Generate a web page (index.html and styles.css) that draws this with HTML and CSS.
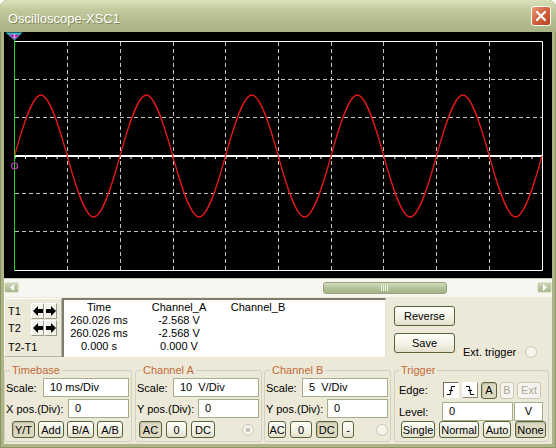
FILE: index.html
```html
<!DOCTYPE html>
<html lang="en">
<head>
  <meta charset="UTF-8">
  <meta name="viewport" content="width=device-width, initial-scale=1.0">
  <title>Oscilloscope-XSC1</title>
  <link rel="stylesheet" href="styles.css">
</head>
<body>
  <div class="window">
    <div class="titlebar">
      <span class="title">Oscilloscope-XSC1</span>
      <span class="close"><svg width="12" height="12" viewBox="0 0 12 12"><path d="M2 2L10 10M10 2L2 10"/></svg></span>
    </div>

    <div class="main">
      <div class="screen">
        <svg width="548" height="246" viewBox="0 0 548 246">
          <path class="grid" d="M63.5 10V238M116.5 10V238M169.5 10V238M221.5 10V238M274.5 10V238M327.5 10V238M379.5 10V238M432.5 10V238M485.5 10V238M11 47.5H538M11 85.5H538M11 161.5H538M11 199.5H538"/>
          <path class="frame" d="M10.5 9.5H538.5V238.5H10.5"/>
          <path class="axis" d="M10.5 124H538"/>
          <path class="ticks" d="M10.5 126H538"/>
          <path class="trace-a" d="M10.5,124 C19.1,92.75 28.48,63 36.875,63 S54.65,92.75 63.25,124 S81.23,185 89.625,185 S107.4,155.25 116,124 S133.98,63 142.375,63 S160.15,92.75 168.75,124 S186.73,185 195.125,185 S212.9,155.25 221.5,124 S239.48,63 247.875,63 S265.65,92.75 274.25,124 S292.23,185 300.625,185 S318.4,155.25 327,124 S344.98,63 353.375,63 S371.15,92.75 379.75,124 S397.73,185 406.125,185 S423.9,155.25 432.5,124 S450.48,63 458.875,63 S476.65,92.75 485.25,124 S503.23,185 511.625,185 S529.4,155.25 538,124"/>
          <path class="cursor" d="M10.5 4V238.5"/>
          <circle class="ground" cx="10.5" cy="134" r="3"/>
          <path class="marker-edge" d="M1.5 0.5H18.5L10.5 8.5Z"/>
          <path class="marker" d="M4.5 2.5H15.5L10.5 7.5Z"/>
          <text class="marker-num" x="10.5" y="6">1</text>
        </svg>
      </div>

      <div class="scrollbar">
        <span class="sb-btn"><svg width="6" height="7" viewBox="0 0 6 7"><path d="M5 0V7L1 3.5Z"/></svg></span>
        <div class="sb-track"><span class="sb-thumb"><i></i></span></div>
        <span class="sb-btn"><svg width="6" height="7" viewBox="0 0 6 7"><path d="M1 0V7L5 3.5Z"/></svg></span>
      </div>

      <div class="readout">
        <div class="cursors">
          <div class="cur-row">
            <span class="cur-name">T1</span>
            <span class="arrow-btn"><svg width="10" height="10" viewBox="0 0 10 10"><path d="M0 5L5 0V3H10V7H5V10Z"/></svg></span>
            <span class="arrow-btn"><svg width="10" height="10" viewBox="0 0 10 10"><path d="M10 5L5 0V3H0V7H5V10Z"/></svg></span>
          </div>
          <div class="cur-row">
            <span class="cur-name">T2</span>
            <span class="arrow-btn"><svg width="10" height="10" viewBox="0 0 10 10"><path d="M0 5L5 0V3H10V7H5V10Z"/></svg></span>
            <span class="arrow-btn"><svg width="10" height="10" viewBox="0 0 10 10"><path d="M10 5L5 0V3H0V7H5V10Z"/></svg></span>
          </div>
          <div class="cur-diff">T2-T1</div>
        </div>

        <div class="values">
          <span>Time</span><span>Channel_A</span><span>Channel_B</span>
          <span>260.026 ms</span><span>-2.568 V</span><span></span>
          <span>260.026 ms</span><span>-2.568 V</span><span></span>
          <span>0.000 s</span><span>0.000 V</span><span></span>
        </div>

        <div class="actions">
          <button class="btn big">Reverse</button>
          <div class="act-row">
            <button class="btn big">Save</button>
            <span class="ext">Ext. trigger</span>
            <span class="radio ext-radio"></span>
          </div>
        </div>
      </div>

      <div class="controls">
        <fieldset class="group timebase">
          <legend>Timebase</legend>
          <div class="row"><span>Scale:</span><span class="field">10 ms/Div</span></div>
          <div class="row"><span>X pos.(Div):</span><span class="field pos">0</span></div>
          <div class="btn-row tb-btns">
            <button class="btn on w23">Y/T</button>
            <button class="btn w26">Add</button>
            <button class="btn w27">B/A</button>
            <button class="btn w26">A/B</button>
          </div>
        </fieldset>

        <fieldset class="group chan-a">
          <legend>Channel A</legend>
          <div class="row"><span>Scale:</span><span class="field">10&nbsp; V/Div</span></div>
          <div class="row"><span>Y pos.(Div):</span><span class="field pos">0</span></div>
          <div class="btn-row ch-btns">
            <button class="btn on w23">AC</button>
            <button class="btn w21">0</button>
            <button class="btn w24">DC</button>
            <span class="radio dot a-radio"></span>
          </div>
        </fieldset>

        <fieldset class="group chan-b">
          <legend>Channel B</legend>
          <div class="row"><span>Scale:</span><span class="field">5&nbsp; V/Div</span></div>
          <div class="row"><span>Y pos.(Div):</span><span class="field pos">0</span></div>
          <div class="btn-row ch-btns">
            <button class="btn w19">AC</button>
            <button class="btn w22">0</button>
            <button class="btn on w23">DC</button>
            <button class="btn w13">-</button>
            <span class="radio b-radio"></span>
          </div>
        </fieldset>

        <fieldset class="group trigger">
          <legend>Trigger</legend>
          <div class="edge-row">
            <span class="trig-label">Edge:</span>
            <span class="edge on"><svg width="10" height="11" viewBox="0 0 10 11"><path d="M1 9.5H4.5L5.5 1.5H9M3 5.5H7"/></svg></span>
            <span class="edge"><svg width="10" height="11" viewBox="0 0 10 11"><path d="M1 1.5H4.5L5.5 9.5H9M3 5.5H7"/></svg></span>
            <button class="btn on w16">A</button>
            <button class="btn off w14">B</button>
            <button class="btn off w24">Ext</button>
          </div>
          <div class="level-row">
            <span class="trig-label">Level:</span>
            <span class="field level">0</span>
            <span class="field unit">V</span>
          </div>
          <div class="btn-row trig-btns">
            <button class="btn w34">Single</button>
            <button class="btn w40">Normal</button>
            <button class="btn w28">Auto</button>
            <button class="btn on w31">None</button>
          </div>
        </fieldset>
      </div>
    </div>
  </div>
</body>
</html>
```

FILE: styles.css
```css
* {
  margin: 0;
  padding: 0;
  box-sizing: border-box;
}

body {
  width: 556px;
  height: 448px;
  overflow: hidden;
  background: #fff;
  color: #000;
  font: 11px "Liberation Sans", Arial, sans-serif;
}

.window {
  display: flex;
  flex-direction: column;
  width: 556px;
  height: 448px;
  background: #adb587;
  border-radius: 8px 8px 0 0;
  box-shadow: inset 1px 0 #8b9366, inset -1px 0 #8b9366, inset 0 -1px #8b9366;
}

/* title bar */
.titlebar {
  display: flex;
  align-items: center;
  justify-content: space-between;
  height: 32px;
  padding: 0 5px 0 8px;
  border-radius: 8px 8px 0 0;
  background: linear-gradient(#dce2bd, #c3cb9e 30%, #b3bc8d 70%, #aab384);
}

.title {
  padding-top: 4px;
  color: #fff;
  font-size: 13px;
  text-shadow: 1px 1px 1px #767e52;
}

.close {
  display: flex;
  align-items: center;
  justify-content: center;
  width: 20px;
  height: 20px;
  border: 1px solid #fff;
  border-radius: 3px;
  background: linear-gradient(135deg, #eb9a78, #d2603b 50%, #b9441f);
}

.close svg {
  fill: none;
  stroke: #fff;
  stroke-width: 2.2;
  stroke-linecap: round;
}

.main {
  display: flex;
  flex-direction: column;
  flex: 1;
  margin: 0 4px 4px;
  background: #ece9d8;
}

/* screen */
.screen {
  height: 246px;
  background: #000;
}

.screen svg {
  display: block;
}

.grid {
  fill: none;
  stroke: #c4c4c4;
  stroke-width: 1;
  stroke-dasharray: 4 3;
}

.frame {
  fill: none;
  stroke: #fff;
  stroke-width: 1;
}

.axis {
  stroke: #fff;
  stroke-width: 2;
}

.ticks {
  stroke: #fff;
  stroke-width: 2;
  stroke-dasharray: 1 9.55;
}

.trace-a {
  fill: none;
  stroke: #e3191c;
  stroke-width: 1.3;
}

.cursor {
  stroke: #22d222;
  stroke-width: 1;
}

.ground {
  fill: none;
  stroke: #c03cc0;
  stroke-width: 1.2;
}

.marker-edge {
  fill: #2cbcc4;
}

.marker {
  fill: #b42cb4;
}

.marker-num {
  fill: #fff;
  font-size: 5px;
  text-anchor: middle;
}

/* scrollbar */
.scrollbar {
  display: flex;
  align-items: flex-start;
  height: 19px;
  padding-top: 3px;
  background: #f7f6f0;
  border-top: 1px solid #c9c8bb;
}

.sb-btn {
  display: flex;
  align-items: center;
  justify-content: center;
  width: 15px;
  height: 11px;
  border: 1px solid #e0e6d2;
  border-radius: 2px;
  background: linear-gradient(#cbd5b4, #a9b78e);
}

.sb-btn svg {
  fill: #fff;
}

.sb-track {
  flex: 1;
  padding-left: 304px;
}

.sb-thumb {
  display: flex;
  align-items: center;
  justify-content: center;
  width: 124px;
  height: 12px;
  border: 1px solid #98a67a;
  border-radius: 3px;
  background: linear-gradient(#d4ddbf, #b4c299 50%, #a4b48a);
}

.sb-thumb i {
  width: 8px;
  height: 6px;
  background: repeating-linear-gradient(90deg, #eef2e2 0 1px, transparent 1px 2px);
}

/* readout */
.readout {
  display: flex;
  height: 63px;
  padding-top: 1px;
}

.cursors {
  width: 58px;
  height: 59px;
  padding: 4px 0 0 3px;
  border: 1px solid;
  border-color: #fff #b9b6a5 #b9b6a5 #fff;
}

.cur-row {
  display: flex;
  align-items: center;
  height: 16px;
}

.cur-row + .cur-row {
  margin-top: 1px;
}

.cur-name {
  width: 23px;
}

.arrow-btn {
  display: flex;
  align-items: center;
  justify-content: center;
  width: 13px;
  height: 16px;
  border: 1px solid;
  border-color: #fff #9d9a8a #9d9a8a #fff;
  background: #f3f2ea;
}

.cur-diff {
  margin-top: 5px;
  line-height: 13px;
}

.values {
  display: grid;
  grid-template-columns: 70px 90px 68px;
  grid-auto-rows: 13px;
  align-content: start;
  width: 324px;
  height: 59px;
  padding-top: 1px;
  background: #fff;
  border-top: 2px solid #7f7c6d;
  border-left: 2px solid #7f7c6d;
  border-right: 1px solid #e4e2d6;
}

.values span {
  line-height: 13px;
  text-align: center;
}

.actions {
  display: flex;
  flex-direction: column;
  margin-left: 8px;
  padding-top: 8px;
}

.act-row {
  display: flex;
  align-items: flex-end;
  margin-top: 7px;
}

.ext {
  margin: 0 0 -6px 8px;
  line-height: 13px;
}

/* buttons */
.btn {
  height: 17px;
  padding: 0;
  border: 1px solid #57643a;
  border-radius: 3px;
  background: linear-gradient(#fefefa, #f3f1e5 60%, #e3e0cc);
  color: #000;
  font: inherit;
}

.btn.big {
  width: 61px;
  height: 20px;
}

.btn.on {
  background: #dcd8c2;
  box-shadow: inset 1px 1px 1px #bdb9a2;
}

.btn.off {
  color: #aca899;
  border-color: #c9c7b6;
  background: #f5f4ee;
}

.w13 { width: 13px; }
.w14 { width: 14px; }
.w16 { width: 16px; }
.w19 { width: 19px; }
.w21 { width: 21px; }
.w22 { width: 22px; }
.w23 { width: 23px; }
.w24 { width: 24px; }
.w26 { width: 26px; }
.w27 { width: 27px; }
.w28 { width: 28px; }
.w31 { width: 31px; }
.w34 { width: 34px; }
.w40 { width: 40px; }

.radio {
  width: 12px;
  height: 12px;
  border: 1px solid #cbc9b8;
  border-radius: 50%;
  background: #f4f3ec;
}

.radio.dot {
  background: radial-gradient(circle, #c5c3b4 0 2px, #f4f3ec 2.5px);
}

.ext-radio {
  margin: 0 0 -5px 9px;
}

/* control groups */
.controls {
  display: flex;
  height: 84px;
  padding-top: 4px;
}

.group {
  height: 78px;
  min-width: 0;
  margin-right: 3px;
  padding: 1px 2px 0 1px;
  border: 1px solid #d0d0bf;
  border-radius: 3px;
}

.group legend {
  margin-left: 4px;
  padding: 0 2px;
  line-height: 13px;
  color: #c2693a;
}

.timebase {
  width: 128px;
}

.chan-a {
  width: 127px;
  margin-right: 2px;
}

.chan-b {
  width: 127px;
}

.trigger {
  width: 155px;
  margin-right: 0;
  padding-left: 4px;
}

.trigger legend {
  margin-left: 0;
}

.row {
  display: flex;
  align-items: center;
  justify-content: space-between;
  height: 19px;
}

.row + .row {
  margin-top: 2px;
}

.field {
  width: 86px;
  height: 19px;
  padding-left: 6px;
  line-height: 17px;
  border: 1px solid #a5ae8a;
  background: #fff;
  white-space: nowrap;
}

.field.pos {
  width: 61px;
}

.btn-row {
  display: flex;
  align-items: center;
  margin-top: 3px;
}

.tb-btns {
  gap: 3px;
  padding-left: 6px;
}

.ch-btns {
  gap: 4px;
  padding-left: 2px;
}

.a-radio {
  margin-left: 23px;
}

.b-radio {
  margin-left: 18px;
}

.edge-row {
  display: flex;
  align-items: center;
  gap: 3px;
  height: 16px;
  margin-top: 4px;
}

.trig-label {
  width: 41px;
}

.level-row .trig-label {
  width: 43px;
}

.edge {
  display: flex;
  align-items: center;
  justify-content: center;
  width: 16px;
  height: 16px;
  border: 1px solid;
  border-color: #fff #8f8c7c #8f8c7c #fff;
  background: #fff;
}

.edge.on {
  border-color: #6f6d60 #fff #fff #6f6d60;
}

.edge svg {
  fill: none;
  stroke: #000;
  stroke-width: 1;
}

.level-row {
  display: flex;
  align-items: center;
  height: 19px;
  margin-top: 4px;
}

.field.level {
  width: 71px;
}

.field.unit {
  width: 29px;
  margin-left: 1px;
  padding: 0;
  text-align: center;
}

.trig-btns {
  gap: 4px;
  margin-top: 0;
  padding-left: 2px;
}
```
